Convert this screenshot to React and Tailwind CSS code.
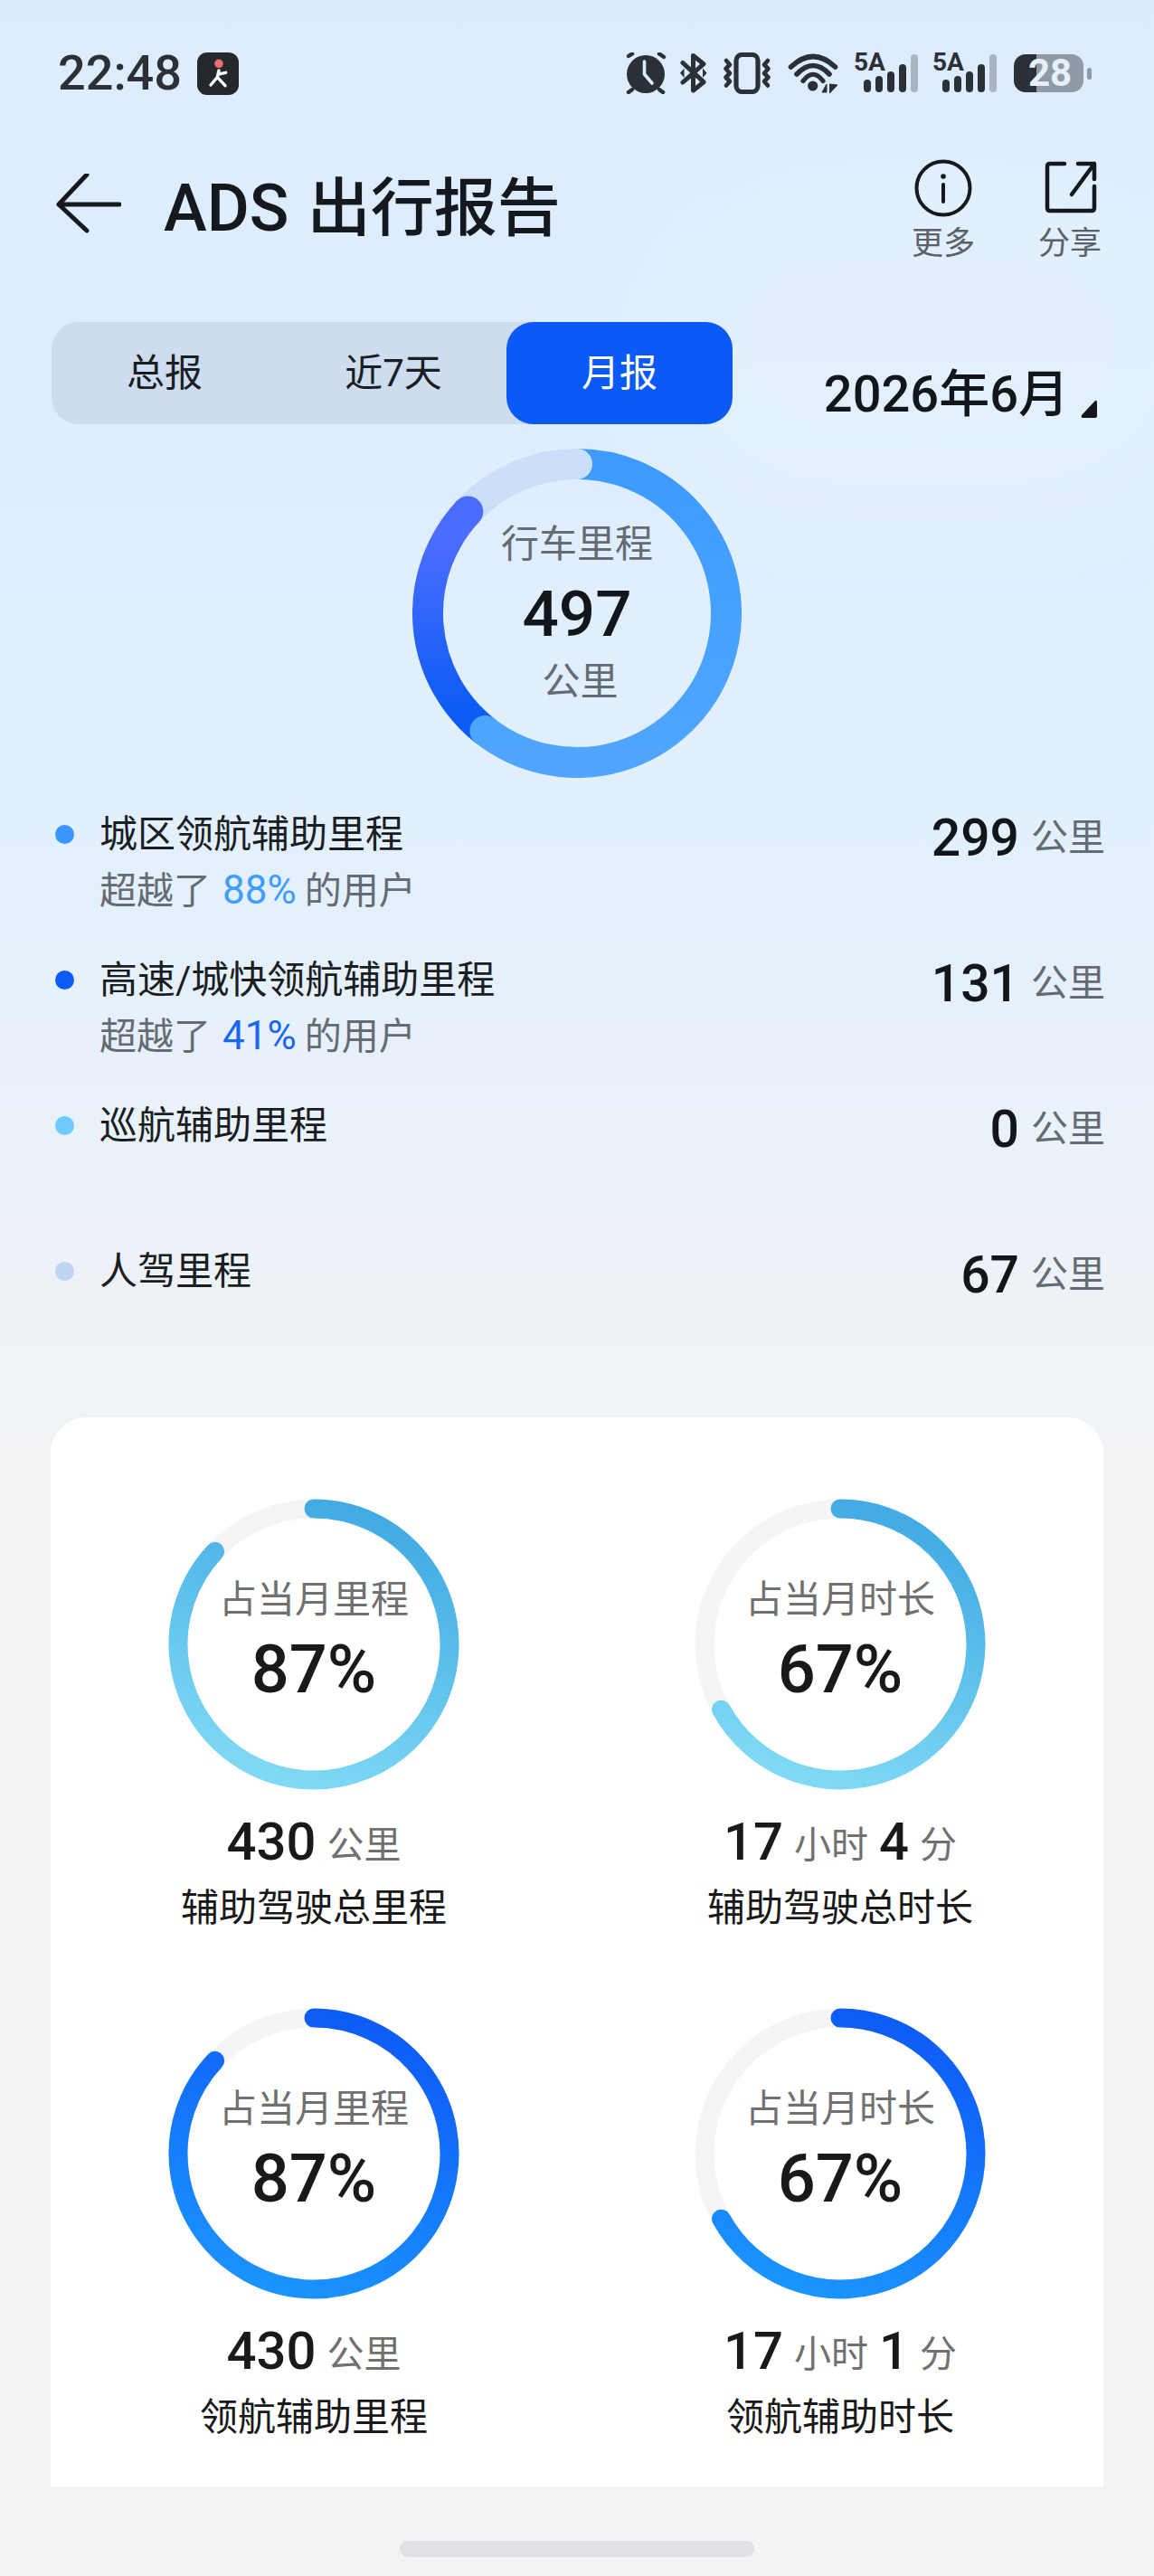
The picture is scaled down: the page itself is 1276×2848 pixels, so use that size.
import React from 'react';

const polar = (cx, cy, r, deg) => {
    const a = ((deg - 90) * Math.PI) / 180;
    return [cx + r * Math.cos(a), cy + r * Math.sin(a)];
};

const arc = (cx, cy, r, from, to) => {
    const [x1, y1] = polar(cx, cy, r, from);
    const [x2, y2] = polar(cx, cy, r, to);
    const large = to - from > 180 ? 1 : 0;
    return `M ${x1} ${y1} A ${r} ${r} 0 ${large} 1 ${x2} ${y2}`;
};

const StatusIcons = () => (
    <div className="flex items-center">
        {/* alarm */}
        <svg width="46" height="46" viewBox="0 0 46 46" className="mr-[15px]">
            <circle cx="23" cy="24" r="21" fill="#2b3036" />
            <path d="M21.5 10 V24 L30 34" fill="none" stroke="#dcecfe" strokeWidth="3.6" strokeLinecap="round" strokeLinejoin="round" />
            <path d="M4 4 L8 1.5 M38 1.5 L43 5 M4 44 L8 41 M38 41 L42 44" stroke="#2b3036" strokeWidth="4.4" strokeLinecap="round" />
        </svg>
        {/* bluetooth */}
        <svg width="30" height="44" viewBox="0 0 30 44" className="mr-[17px]">
            <path d="M3 10.5 L26 31.7 L14.5 41 V2.5 L26 11.7 L3 32" fill="none" stroke="#2b3036" strokeWidth="5" strokeLinejoin="round" strokeLinecap="round" />
            <path d="M4.5 16.5 L0 21.7 L4.5 27 Z M25 16.5 L29.5 21.7 L25 27 Z" fill="#2b3036" />
        </svg>
        {/* vibrate */}
        <svg width="54" height="46" viewBox="0 0 54 46" className="mr-[17px]">
            <rect x="15" y="2.5" width="24" height="41" rx="6.5" fill="none" stroke="#2b3036" strokeWidth="5.2" />
            <path d="M4 9 L8 13.5 L3.5 18 L8 23 L3.5 27.5 L8 32 L4 36.5" fill="none" stroke="#2b3036" strokeWidth="4.6" strokeLinecap="round" strokeLinejoin="round" />
            <path d="M50 9 L46 13.5 L50.5 18 L46 23 L50.5 27.5 L46 32 L50 36.5" fill="none" stroke="#2b3036" strokeWidth="4.6" strokeLinecap="round" strokeLinejoin="round" />
        </svg>
        {/* wifi */}
        <svg width="58" height="46" viewBox="0 0 58 46" className="mr-[16px]">
            <path d="M4.5 16 Q29 -7 53.5 16" fill="none" stroke="#2b3036" strokeWidth="5.6" strokeLinecap="round" />
            <path d="M11 24 Q29 5 47 24" fill="none" stroke="#2b3036" strokeWidth="5.6" strokeLinecap="round" />
            <path d="M18 31.5 Q29 17 40 31.5" fill="none" stroke="#2b3036" strokeWidth="5.2" strokeLinecap="round" />
            <circle cx="28.7" cy="37" r="5.6" fill="#2b3036" />
            <path d="M39 44 L44 35 V44 Z M47.5 35 V45 L56 36 Z" fill="#2b3036" stroke="#2b3036" strokeWidth="1" strokeLinejoin="round" />
        </svg>
        <Signal />
        <div className="w-[16px]" />
        <Signal />
        {/* battery */}
        <div className="ml-[19px] flex items-center">
            <div className="w-[77px] h-[42px] rounded-[13px] bg-[linear-gradient(90deg,#2b3036_25px,#8f9aa6_25px)] flex items-center justify-center">
                <span className="text-[42px] leading-[42px] font-bold text-[#e6f0fb] pl-[3px]">28</span>
            </div>
            <div className="ml-[4px] w-[5px] h-[13px] rounded-full bg-[#8f9aa6]" />
        </div>
    </div>
);

const Signal = () => (
    <div className="relative w-[71px] h-[44px]">
        <span className="absolute left-0 top-[-6px] text-[28px] leading-[32px] font-bold text-[#2b3036]">5A</span>
        <svg width="71" height="44" viewBox="0 0 71 44">
            <rect x="11" y="29" width="8" height="14" rx="4" fill="#2b3036" />
            <rect x="24" y="25" width="8" height="18" rx="4" fill="#2b3036" />
            <rect x="37" y="20" width="8" height="23" rx="4" fill="#2b3036" />
            <rect x="50" y="12" width="8" height="31" rx="4" fill="#2b3036" />
            <rect x="63" y="1" width="8" height="42" rx="4" fill="#a9b5c2" />
        </svg>
    </div>
);

const MainRing = () => {
    const c = 182;
    const r = 165;
    const sw = 34;
    const blueEnd = 218;
    const darkEnd = 313;
    const lightEnd = 360;
    const [bx, by] = polar(c, c, r, blueEnd);
    const [dx, dy] = polar(c, c, r, darkEnd);
    return (
        <div className="relative w-[364px] h-[364px] mx-auto">
            <svg width="364" height="364" viewBox="0 0 364 364">
                <defs>
                    <linearGradient id="blueArc" x1="0" y1="0" x2="0" y2="1">
                        <stop offset="0" stopColor="#3d9bff" />
                        <stop offset="1" stopColor="#50a6ff" />
                    </linearGradient>
                    <linearGradient id="darkArc" x1="0" y1="1" x2="0" y2="0">
                        <stop offset="0.1" stopColor="#0d5cf5" />
                        <stop offset="0.85" stopColor="#4a6cff" />
                    </linearGradient>
                </defs>
                <path d={arc(c, c, r, 0, blueEnd)} fill="none" stroke="url(#blueArc)" strokeWidth={sw} />
                <path d={arc(c, c, r, blueEnd, darkEnd)} fill="none" stroke="url(#darkArc)" strokeWidth={sw} />
                <path d={arc(c, c, r, darkEnd, lightEnd)} fill="none" stroke="#cbdff8" strokeWidth={sw} />
                <circle cx={bx} cy={by} r={sw / 2} fill="#4ea5ff" />
                <circle cx={dx} cy={dy} r={sw / 2} fill="#4a6cff" />
                <circle cx={c} cy={c - r} r={sw / 2} fill="#cbdff8" />
            </svg>
            <div className="absolute inset-0 flex flex-col items-center pt-[81px]">
                <div className="text-[42px] leading-[50px] text-[#646b73]">行车里程</div>
                <div className="text-[71px] leading-[80px] font-medium text-[#12161b] mt-[12px]">497</div>
                <div className="text-[42px] leading-[50px] text-[#646b73] mt-[10px] pl-[7px]">公里</div>
            </div>
        </div>
    );
};

const StatRow = ({ dot, title, pct, pctColor, value }) => (
    <div className="h-[161px] flex justify-between">
        <div className="flex">
            <div className={`w-[21px] h-[21px] rounded-full mt-[16px] ${dot}`} />
            <div className="ml-[28px] pt-[2px]">
                <div className="text-[42px] leading-[50px] text-[#1a1e23]">{title}</div>
                <div className={pct ? 'text-[41px] leading-[50px] text-[#646b73] mt-[11px]' : 'hidden'}>
                    超越了<span className={`ml-[13px] mr-[9px] text-[44px] ${pctColor}`}>{pct}</span>的用户
                </div>
            </div>
        </div>
        <div className="flex items-center h-[50px] mt-[6px]">
            <span className="text-[57px] leading-[50px] font-medium text-[#12161b]">{value}</span>
            <span className="text-[41px] leading-[50px] text-[#646b73] ml-[13px] -mt-[2px]">公里</span>
        </div>
    </div>
);

const SmallRing = ({ id, pct, from, to, caption, big, children, label }) => {
    const c = 161;
    const r = 150;
    return (
        <div className="h-[563px] flex flex-col items-center">
            <div className="relative w-[322px] h-[322px]">
                <svg width="322" height="322" viewBox="0 0 322 322">
                    <defs>
                        <linearGradient id={id} x1="0.6" y1="0" x2="0.3" y2="1">
                            <stop offset="0" stopColor={from} />
                            <stop offset="1" stopColor={to} />
                        </linearGradient>
                    </defs>
                    <circle cx={c} cy={c} r={r} fill="none" stroke="#f5f5f5" strokeWidth="21" />
                    <path d={arc(c, c, r, 0, (pct * 360) / 100)} fill="none" stroke={`url(#${id})`} strokeWidth="21" strokeLinecap="round" />
                </svg>
                <div className="absolute inset-0 flex flex-col items-center pt-[87px]">
                    <div className="text-[42px] leading-[50px] text-[#707070]">{caption}</div>
                    <div className="text-[74px] leading-[80px] font-medium text-[#191919] mt-[12px]">{big}</div>
                </div>
            </div>
            <div className="flex items-center h-[60px] mt-[27px]">{children}</div>
            <div className="text-[42px] leading-[50px] text-[#191919] mt-[19px]">{label}</div>
        </div>
    );
};

const Num = ({ children }) => <span className="text-[58px] leading-[60px] font-medium text-[#191919]">{children}</span>;
const Unit = ({ children }) => <span className="text-[41px] leading-[60px] text-[#707070] mx-[12px] mt-[7px] last:mr-0">{children}</span>;

const App = () => {
    return (
        <div className="relative isolate w-[1276px] h-[2848px] overflow-hidden flex flex-col bg-[linear-gradient(180deg,#dcecfe_0%,#e1effe_30%,#f1f3f5_56%,#f1f3f5_100%)] font-[Roboto,'Noto_Sans_CJK_SC',sans-serif]">
            {/* faint light patch behind the header */}
            <div className="absolute -z-10 right-[-80px] top-[170px] w-[660px] h-[420px] rounded-full bg-white/15 blur-[60px]" />

            {/* Status bar */}
            <div className="h-[162px] shrink-0 flex items-center justify-between pl-[64px] pr-[69px]">
                <div className="flex items-center">
                    <span className="text-[54px] leading-[60px] font-medium text-[#2b3036]">22:48</span>
                    <svg width="46" height="47" viewBox="0 0 46 47" className="ml-[17px]">
                        <rect width="46" height="47" rx="11" fill="#24282d" />
                        <circle cx="24" cy="12.3" r="4.8" fill="#f26d6d" />
                        <path d="M24 20 L22.3 27.3 L15 36 M22.3 27.3 L31 36.7 M23.5 24 L31.7 22.3" fill="none" stroke="#fff" strokeWidth="3.4" strokeLinecap="round" strokeLinejoin="round" />
                    </svg>
                </div>
                <StatusIcons />
            </div>

            {/* Header */}
            <div className="h-[194px] shrink-0 flex justify-between pl-[62px] pr-[58px]">
                <div className="flex items-start pt-[30px]">
                    <svg width="72" height="68" viewBox="0 0 72 68">
                        <path d="M34 4 L3 37 L34 66 M3 37 H70" fill="none" stroke="#15191e" strokeWidth="5" strokeLinecap="round" strokeLinejoin="round" transform="translate(0 -3)" />
                    </svg>
                    <span className="ml-[47px] text-[70px] leading-[80px] font-medium text-[#15191e] -mt-[1px]"><span className="text-[72px] mr-[3px]">ADS</span> 出行报告</span>
                </div>
                <div className="flex pt-[14px]">
                    <div className="flex flex-col items-center w-[70px]">
                        <svg width="64" height="64" viewBox="0 0 64 64">
                            <circle cx="32" cy="32" r="29.5" fill="none" stroke="#15191e" strokeWidth="4" />
                            <circle cx="32" cy="19" r="2.8" fill="#15191e" />
                            <path d="M32 28 V47" stroke="#15191e" strokeWidth="4" strokeLinecap="round" />
                        </svg>
                        <span className="text-[35px] leading-[40px] text-[#5b6168] mt-[10px]">更多</span>
                    </div>
                    <div className="flex flex-col items-center w-[70px] ml-[70px]">
                        <svg width="64" height="64" viewBox="0 0 64 64">
                            <path d="M26 5 H10 Q7 5 7 8 V54 Q7 57 10 57 H56 Q59 57 59 54 V30" fill="none" stroke="#15191e" strokeWidth="4.5" strokeLinecap="round" />
                            <path d="M41 5 H59 V22 M59 5 L34 39" fill="none" stroke="#15191e" strokeWidth="4.5" strokeLinecap="round" strokeLinejoin="round" />
                        </svg>
                        <span className="text-[35px] leading-[40px] text-[#5b6168] mt-[10px]">分享</span>
                    </div>
                </div>
            </div>

            {/* Tabs + month */}
            <div className="h-[113px] shrink-0 flex pl-[57px] pr-[63px] justify-between">
                <div className="w-[753px] rounded-[30px] bg-[#cddcee] flex">
                    <div className="flex-1 flex items-center justify-center text-[42px] text-[#1a1e23] pr-[3px]">总报</div>
                    <div className="flex-1 flex items-center justify-center text-[42px] text-[#1a1e23]">近7天</div>
                    <div className="w-[250px] flex items-center justify-center text-[42px] text-white bg-[#0b59f7] rounded-[30px]">月报</div>
                </div>
                <div className="flex items-end">
                    <span className="text-[56px] leading-[70px] font-medium text-[#12161b] mb-[-2px]">2026年6月</span>
                    <svg width="18" height="20" viewBox="0 0 18 20" className="ml-[13px] mb-[7px]">
                        <path d="M16 1 Q18 0 18 3 V18 Q18 20 16 20 H2 Q0 20 1 17 Z" fill="#12161b" />
                    </svg>
                </div>
            </div>

            {/* Total ring */}
            <div className="mt-[27px] shrink-0 flex justify-center">
                <MainRing />
            </div>

            {/* Stat rows */}
            <div className="mt-[36px] pl-[61px] pr-[54px] shrink-0">
                <StatRow dot="bg-[#3b97ff]" title="城区领航辅助里程" pct="88%" pctColor="text-[#3f9dfb]" value="299" />
                <StatRow dot="bg-[#0d5cf5]" title="高速/城快领航辅助里程" pct="41%" pctColor="text-[#1a66ee]" value="131" />
                <StatRow dot="bg-[#6fcbff]" title="巡航辅助里程" value="0" />
                <StatRow dot="bg-[#bed5f2]" title="人驾里程" value="67" />
            </div>

            {/* Card */}
            <div className="mt-[27px] mx-[56px] h-[1182px] shrink-0 bg-white rounded-t-[40px] pt-[90px] grid grid-cols-2 content-start">
                <SmallRing id="c1" pct={87} from="#42abe4" to="#80daf5" caption="占当月里程" big="87%" label="辅助驾驶总里程">
                    <Num>430</Num><Unit>公里</Unit>
                </SmallRing>
                <SmallRing id="c2" pct={67} from="#42abe4" to="#80daf5" caption="占当月时长" big="67%" label="辅助驾驶总时长">
                    <Num>17</Num><Unit>小时</Unit><Num>4</Num><Unit>分</Unit>
                </SmallRing>
                <SmallRing id="c3" pct={87} from="#0e5cf6" to="#1a94ff" caption="占当月里程" big="87%" label="领航辅助里程">
                    <Num>430</Num><Unit>公里</Unit>
                </SmallRing>
                <SmallRing id="c4" pct={67} from="#0e5cf6" to="#1a94ff" caption="占当月时长" big="67%" label="领航辅助时长">
                    <Num>17</Num><Unit>小时</Unit><Num>1</Num><Unit>分</Unit>
                </SmallRing>
            </div>

            {/* Home bar */}
            <div className="mt-[60px] w-[392px] h-[18px] mx-auto rounded-full bg-[#dfe1e4] shrink-0" />
        </div>
    );
};

export default App;
